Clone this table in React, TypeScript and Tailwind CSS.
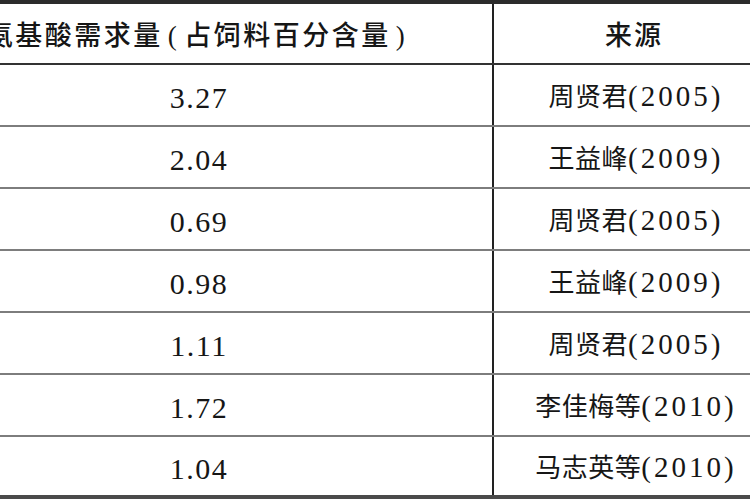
import React from 'react';

const rows = [
  { value: '3.27', name: '周贤君', year: '(2005)' },
  { value: '2.04', name: '王益峰', year: '(2009)' },
  { value: '0.69', name: '周贤君', year: '(2005)' },
  { value: '0.98', name: '王益峰', year: '(2009)' },
  { value: '1.11', name: '周贤君', year: '(2005)' },
  { value: '1.72', name: '李佳梅等', year: '(2010)' },
  { value: '1.04', name: '马志英等', year: '(2010)' },
];

const serif = { fontFamily: '"Liberation Serif", "Noto Sans CJK SC", serif' };

export default function App() {
  return (
    <div className="w-[750px] h-[500px] overflow-hidden bg-white text-[#161616]" style={serif}>
      <div className="ml-[-94px] w-[868px] border-t-4 border-[#2b2b2b]">
        {/* Header */}
        <div className="grid grid-cols-[588px_280px] h-[61px] border-b-2 border-[#333]">
          <div className="flex items-center justify-center pt-[6px] border-r-2 border-[#222] text-[27px] tracking-[2.5px] font-medium whitespace-nowrap">
            <span>氨基酸需求量</span>
            <span className="px-[5px]">(</span>
            <span>占饲料百分含量</span>
            <span className="px-[5px]">)</span>
          </div>
          <div className="flex items-center justify-center pt-[6px] text-[27px] tracking-[2px] font-medium">
            来源
          </div>
        </div>

        {/* Body */}
        {rows.map((row, i) => {
          const last = i === rows.length - 1;
          return (
            <div
              key={i}
              className={`grid grid-cols-[588px_280px] ${
                last ? 'h-[62px] border-b-4 border-[#4a4a4a]' : 'h-[62px] border-b-2 border-[#7d7d7d]'
              }`}
            >
              <div className="flex items-center justify-center pt-[4px] border-r-2 border-[#222] text-[30px] tracking-[1.5px]">
                {row.value}
              </div>
              <div className="flex items-center justify-center pt-[4px] pl-[4px]">
                <span className="text-[26px] tracking-[0.5px]">{row.name}</span>
                <span className="text-[29px] tracking-[3px]">{row.year}</span>
              </div>
            </div>
          );
        })}
      </div>
    </div>
  );
}
